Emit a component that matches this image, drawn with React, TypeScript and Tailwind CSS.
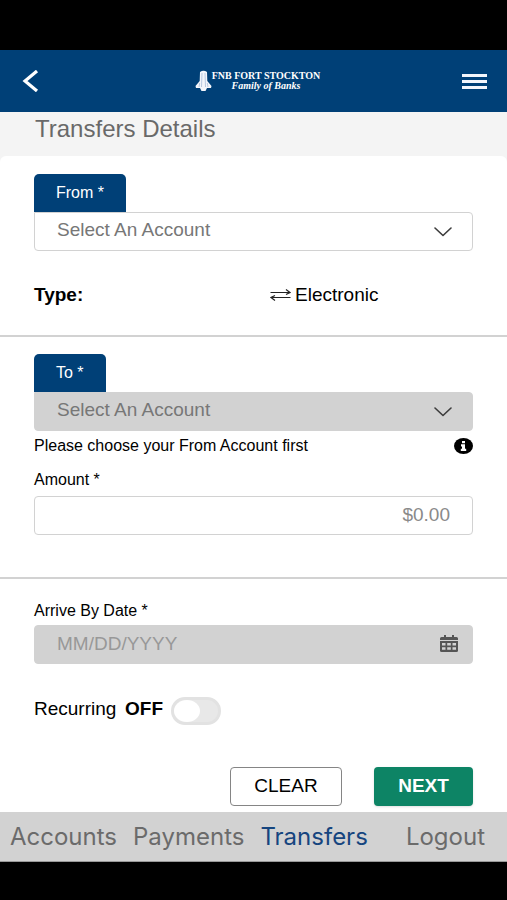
import { useState, type ReactNode } from "react";

const navItems = ["Accounts", "Payments", "Transfers", "Logout"];

function Logo() {
  return (
    <a href="#home" className="ml-2 flex items-center text-white" aria-label="FNB Fort Stockton">
      <svg width="17" height="22" viewBox="0 0 17 22" aria-hidden="true">
        <path d="M5 2 Q8.500 -0.500 12 2 L12.300 11 L16.500 16 L16 18 L12 18 L10.500 21 L6.500 21 L5 18 L1 18 L0.500 16 L4.700 11 Z" fill="#f3f6fb" />
        <path d="M7 3 L6.500 17 M10 3 L10.500 17 M4.700 13 L4 17 M12.300 13 L13 17" stroke="#9db4d4" strokeWidth="0.700" fill="none" />
      </svg>
      <span className="flex flex-col items-center font-['Liberation_Serif',serif] text-[10px] leading-[10px] font-bold">
        <span>FNB FORT STOCKTON</span>
        <span className="italic">Family of Banks</span>
      </span>
    </a>
  );
}

function Chevron() {
  return (
    <svg
      className="pointer-events-none absolute top-[15px] right-[21px]"
      width="18"
      height="10"
      viewBox="0 0 18 10"
      fill="none"
      stroke="#3c3c3c"
      strokeWidth="1.600"
      strokeLinecap="round"
      strokeLinejoin="round"
      aria-hidden="true"
    >
      <path d="M1 1 L9 8.500 L17 1" />
    </svg>
  );
}

function AccountSelect({ id, label, disabled = false }: { id: string; label: string; disabled?: boolean }) {
  return (
    <div className="flex flex-col items-start">
      <label htmlFor={id} className="flex h-[38px] items-center rounded-t-[5px] bg-[#004077] px-[22px] text-base text-white">
        {label}
      </label>
      <div className="relative w-full">
        <select
          id={id}
          disabled={disabled}
          className="block h-[39px] w-full appearance-none rounded-b-[4px] rounded-tr-[4px] border border-[#d2d2d2] bg-white px-[22px] pb-[2px] text-[19px] text-[#777] opacity-100 disabled:bg-[#d2d2d2]"
        >
          <option>Select An Account</option>
        </select>
        <Chevron />
      </div>
    </div>
  );
}

function Section({ children, className }: { children: ReactNode; className: string }) {
  return <section className={`px-[34px] ${className}`}>{children}</section>;
}

export default function App() {
  const [recurring, setRecurring] = useState(false);

  return (
    <div className="flex min-h-screen flex-col bg-black pt-[50px] pb-[38px] font-['Liberation_Sans',Arial,sans-serif] text-black">
      <header className="grid h-[62px] shrink-0 grid-cols-[1fr_auto_1fr] items-center bg-[#004077] px-5">
        <button type="button" aria-label="Back" className="flex w-5 justify-center">
          <svg width="18" height="22" viewBox="0 0 18 22" fill="none" stroke="#fff" strokeWidth="3.200" aria-hidden="true">
            <path d="M16 1 L4 11 L16 21" />
          </svg>
        </button>
        <Logo />
        <button type="button" aria-label="Menu" className="justify-self-end">
          <svg width="25" height="15" viewBox="0 0 25 15" fill="#f3f6fc" aria-hidden="true">
            <path d="M0 0h25v3H0zM0 6h25v3H0zM0 12h25v3H0z" />
          </svg>
        </button>
      </header>

      <main className="flex-1 bg-[#f4f4f4]">
        <h1 className="px-[35px] pt-[3px] pb-[13px] text-2xl leading-7 text-[#696969]">Transfers Details</h1>

        <form className="rounded-t-[6px] bg-white" onSubmit={(e) => e.preventDefault()}>
          <Section className="border-b-2 border-[#d2d2d2] pt-[18px] pb-7">
            <AccountSelect id="from" label="From *" />
            <div className="mt-8 grid grid-cols-[236px_1fr] text-[19px] leading-6">
              <span className="font-bold">Type:</span>
              <span className="flex items-center gap-1">
                <svg width="21" height="12" viewBox="0 0 21 12" fill="none" stroke="#222" strokeWidth="1.200" aria-hidden="true">
                  <path d="M0.500 3.500H19M16 0.500L20 3.500L16 5.500M20.500 8.500H2M5 6.500L1 8.500L5 11.500" />
                </svg>
                Electronic
              </span>
            </div>
          </Section>

          <Section className="border-b-2 border-[#d2d2d2] pt-[17px] pb-[42px]">
            <AccountSelect id="to" label="To *" disabled />
            <div className="flex h-[29px] items-center justify-between text-base">
              <p>Please choose your From Account first</p>
              <button type="button" aria-label="More information">
                <svg width="19" height="16" viewBox="0 0 19 16" aria-hidden="true">
                  <ellipse cx="9.500" cy="8" rx="9.500" ry="8" fill="#000" />
                  <path d="M8 3h3v2.200H8zM7 6.300h4v4.500h1.200V13H6.800v-2.200H8V8.500H7z" fill="#fff" />
                </svg>
              </button>
            </div>
            <label htmlFor="amount" className="mt-2 block pb-1 text-base leading-6">
              Amount *
            </label>
            <input
              id="amount"
              placeholder="$0.00"
              className="block h-[39px] w-full rounded-[4px] border border-[#d2d2d2] bg-white px-[22px] pb-[2px] text-right text-[19px] placeholder:text-[#8a8a8a]"
            />
          </Section>

          <Section className="pt-5 pb-[6px]">
            <label htmlFor="date" className="block pb-[2px] text-base leading-6">
              Arrive By Date *
            </label>
            <div className="relative">
              <input
                id="date"
                disabled
                placeholder="MM/DD/YYYY"
                className="block h-[39px] w-full rounded-[4px] border border-[#d2d2d2] bg-[#d2d2d2] px-[22px] pb-[2px] text-[19px] placeholder:text-[#989898]"
              />
              <svg className="absolute top-[10px] right-[15px]" width="18" height="17" viewBox="0 0 18 17" aria-hidden="true">
                <path d="M1.500 2H4V0h2v2h6V0h2v2h2.500Q18 2 18 3.500V5H0V3.500Q0 2 1.500 2Z" fill="#555" />
                <path d="M0 6h18v9.500Q18 17 16.500 17h-15Q0 17 0 15.500Z" fill="#555" />
                <path d="M2 8h3.500v2.500H2zM7.200 8h3.600v2.500H7.200zM12.500 8H16v2.500h-3.500zM2 12.200h3.500v2.600H2zM7.200 12.200h3.600v2.600H7.200zM12.500 12.200H16v2.600h-3.500z" fill="#d2d2d2" />
              </svg>
            </div>

            <div className="mt-[33px] flex items-center gap-2 text-[19px] leading-6">
              <label htmlFor="recurring" className="flex w-[129px] justify-between pb-1">
                Recurring <strong>{recurring ? "ON" : "OFF"}</strong>
              </label>
              <input
                id="recurring"
                type="checkbox"
                role="switch"
                checked={recurring}
                onChange={(e) => setRecurring(e.target.checked)}
                className="flex h-7 w-[50px] appearance-none items-center rounded-full border-[3px] border-[#e2e2e2] bg-[#e8e8e8] before:h-[22px] before:w-[26px] before:rounded-[50%] before:bg-white checked:justify-end checked:bg-[#0d8465]"
              />
            </div>

            <div className="mt-[42px] flex justify-end gap-8 text-[19px]">
              <button type="reset" className="h-[39px] w-28 rounded-[4px] border border-[#858585] bg-white">
                CLEAR
              </button>
              <button type="submit" className="h-[39px] w-[99px] rounded-[4px] bg-[#0d8465] font-bold text-white shadow-sm">
                NEXT
              </button>
            </div>
          </Section>
        </form>
      </main>

      <nav className="flex h-[50px] shrink-0 items-center gap-4 border-b border-[#999] bg-[#d2d2d2] pr-[22px] pl-[10px] font-['Inter',sans-serif] text-2xl text-[#6b6b6b]">
        {navItems.map((item) => (
          <a key={item} href={`#${item.toLowerCase()}`} className={`last:ml-auto ${item === "Transfers" ? "text-[#16457f]" : ""}`}>
            {item}
          </a>
        ))}
      </nav>
    </div>
  );
}
